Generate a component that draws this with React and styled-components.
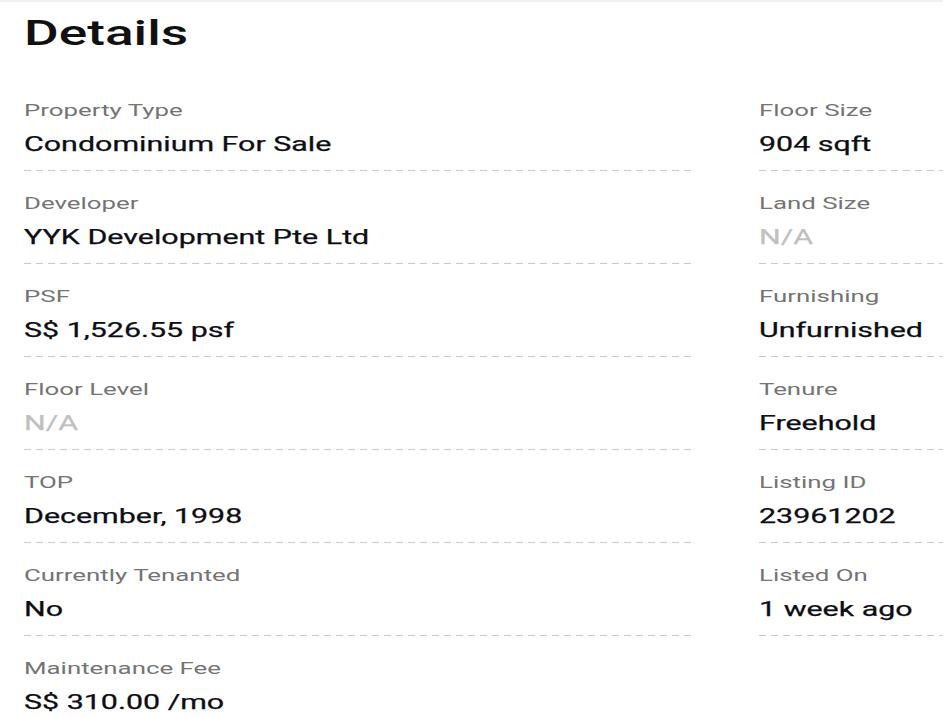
import React from 'react';
import styled, { createGlobalStyle } from 'styled-components';

const GlobalStyle = createGlobalStyle`
  html, body {
    margin: 0;
    padding: 0;
    background: #ffffff;
    overflow: hidden;
  }
  body {
    font-family: 'Roboto', 'Liberation Sans', sans-serif;
  }
`;

// the listing text is drawn wide, as in the source capture
const stretch = `
  transform: scaleX(1.52);
  transform-origin: left center;
`;

const Section = styled.section`
  border-top: 2px solid #f1f1f1;
  padding: 12px 0 0 24px;
  width: 1500px;
`;

const Title = styled.h2`
  margin: 0 0 44px 0;
  font-size: 35px;
  line-height: 40px;
  font-weight: 500;
  color: #111111;
  ${stretch}
`;

const Grid = styled.div`
  display: grid;
  grid-template-columns: 669px 669px;
  column-gap: 66px;
  row-gap: 20px;
`;

const Item = styled.div`
  padding-bottom: 12px;
  background: linear-gradient(to right, #c9c9c9 58%, transparent 58%) left bottom / 12px 1px repeat-x;
`;

const Label = styled.div`
  font-size: 17px;
  line-height: 24px;
  font-weight: 400;
  color: #747474;
  ${stretch}
`;

const Value = styled.div`
  margin-top: 7px;
  font-size: 20px;
  line-height: 30px;
  font-weight: 400;
  color: ${({ $muted }) => ($muted ? '#c0c0c0' : '#0d0d14')};
  -webkit-text-stroke: 0.25px currentColor;
  ${stretch}
`;

const rows = [
  [{ label: 'Property Type', value: 'Condominium For Sale' }, { label: 'Floor Size', value: '904 sqft' }],
  [{ label: 'Developer', value: 'YYK Development Pte Ltd' }, { label: 'Land Size', value: 'N/A', muted: true }],
  [{ label: 'PSF', value: 'S$ 1,526.55 psf' }, { label: 'Furnishing', value: 'Unfurnished' }],
  [{ label: 'Floor Level', value: 'N/A', muted: true }, { label: 'Tenure', value: 'Freehold' }],
  [{ label: 'TOP', value: 'December, 1998' }, { label: 'Listing ID', value: '23961202' }],
  [{ label: 'Currently Tenanted', value: 'No' }, { label: 'Listed On', value: '1 week ago' }],
  [{ label: 'Maintenance Fee', value: 'S$ 310.00 /mo' }],
];

export default function App() {
  return (
    <>
      <GlobalStyle />
      <Section>
        <Title>Details</Title>
        <Grid>
          {rows.flat().map(item => (
            <Item key={item.label}>
              <Label>{item.label}</Label>
              <Value $muted={item.muted}>{item.value}</Value>
            </Item>
          ))}
        </Grid>
      </Section>
    </>
  );
}
